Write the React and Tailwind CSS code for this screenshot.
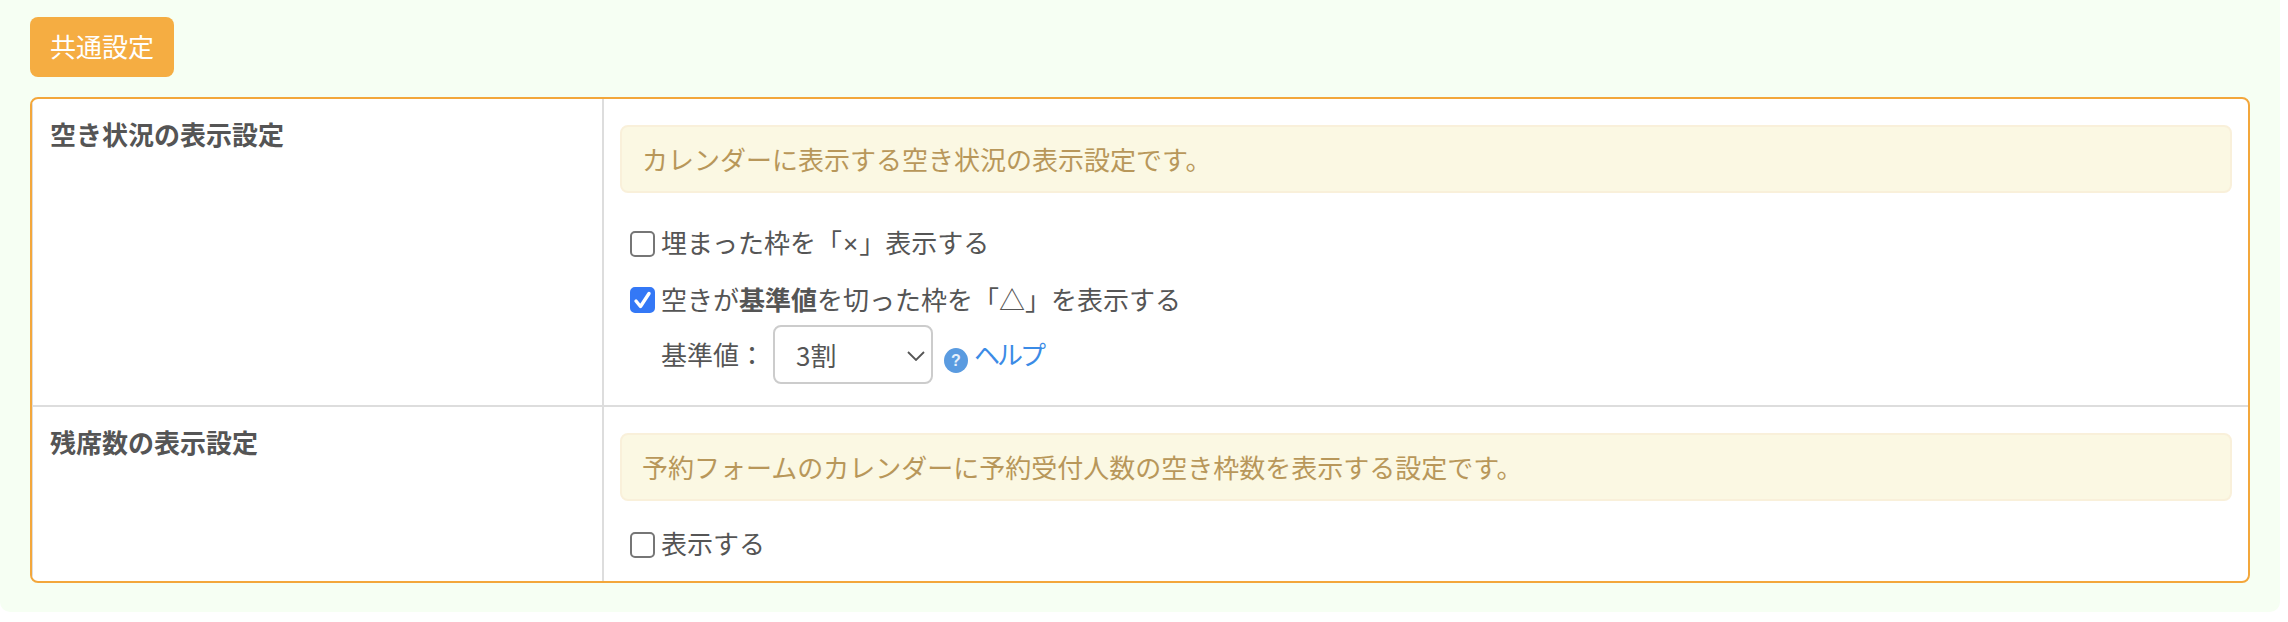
import React from "react";

function Check({ checked }) {
  return (
    <span className="relative w-[26px] h-[26px] shrink-0 mr-[5px]">
      <input
        type="checkbox"
        defaultChecked={checked}
        className="appearance-none block w-[25px] h-[26px] rounded-[5px] border-2 border-[#767676] bg-white checked:bg-[#3478f6] checked:border-[#3478f6]"
      />
      {checked && (
        <svg viewBox="0 0 25 26" className="absolute inset-0 w-[25px] h-[26px] pointer-events-none">
          <path d="M6 14 L10.5 19.5 L19 6.5" fill="none" stroke="#fff" strokeWidth="3.4" strokeLinecap="round" strokeLinejoin="round" />
        </svg>
      )}
    </span>
  );
}

function Notice({ children }) {
  return (
    <div className="h-[68px] flex items-center pl-[20px] rounded-[8px] border-2 border-[#f9f0da] bg-[#fbf8e3] text-[#b8975a]">
      {children}
    </div>
  );
}

export default function App() {
  return (
    <div className="w-[2288px] h-[622px] bg-white overflow-hidden text-[26px] leading-[38px] text-[#555555] font-['Noto_Sans_CJK_JP','Noto_Sans',sans-serif]">
      <div className="w-[2280px] h-[612px] bg-[#f6fff3] rounded-b-[10px] px-[30px] pt-[17px]">
        <button className="block w-[144px] h-[60px] pb-[2px] rounded-[8px] bg-[#f5ad42] text-white text-[26px]">共通設定</button>
        <div className="mt-[20px] h-[486px] bg-white border-2 border-[#f3a73b] rounded-[8px] overflow-hidden">
          <div className="flex h-[308px] border-b-2 border-[#dddddd]">
            <div className="w-[572px] shrink-0 border-l border-r-2 border-[#dddddd] pl-[17px] pt-[16px] font-bold">空き状況の表示設定</div>
            <div className="flex-1 pt-[26px] pl-[16px] pr-[16px]">
              <Notice>カレンダーに表示する空き状況の表示設定です。</Notice>
              <label className="mt-[38px] ml-[10px] h-[26px] flex items-center">
                <Check />
                <span className="pb-[3px]">埋まった枠を「<span className="mx-[1px] font-['Liberation_Sans',sans-serif]">×</span>」表示する</span>
              </label>
              <label className="mt-[30px] ml-[10px] h-[26px] flex items-center">
                <Check checked />
                <span className="pb-[3px]">空きが<b className="font-bold">基準値</b>を切った枠を「△」を表示する</span>
              </label>
              <div className="mt-[12px] ml-[41px] h-[59px] flex items-center">
                <span className="w-[112px] pb-[2px]">基準値：</span>
                <span className="relative w-[160px] h-[59px]">
                  <select className="appearance-none w-full h-full rounded-[8px] border-2 border-[#cccccc] bg-white pl-[21px] text-[#555555] outline-none">
                    <option>3割</option>
                  </select>
                  <svg viewBox="0 0 18 10" className="absolute right-[8px] top-[26px] w-[18px] h-[10px] pointer-events-none">
                    <path d="M1 1 L9 9 L17 1" fill="none" stroke="#555" strokeWidth="1.8" />
                  </svg>
                </span>
                <svg viewBox="0 0 24 25" className="ml-[11px] mt-[11px] w-[24px] h-[25px] shrink-0">
                  <ellipse cx="12" cy="12.5" rx="12" ry="12.5" fill="#5a9be0" />
                  <text x="12" y="18" textAnchor="middle" fontSize="16" fontWeight="700" fill="#e6f0fb" fontFamily="'Liberation Sans', sans-serif">?</text>
                </svg>
                <a className="ml-[6px] pb-[1px] tracking-[-3px] text-[#3b8be6]" href="#">ヘルプ</a>
              </div>
            </div>
          </div>
          <div className="flex h-[174px]">
            <div className="w-[572px] shrink-0 border-l border-r-2 border-[#dddddd] pl-[17px] pt-[16px] font-bold">残席数の表示設定</div>
            <div className="flex-1 pt-[26px] pl-[16px] pr-[16px]">
              <Notice>予約フォームのカレンダーに予約受付人数の空き枠数を表示する設定です。</Notice>
              <label className="mt-[31px] ml-[10px] h-[26px] flex items-center">
                <Check />
                <span className="pb-[4px]">表示する</span>
              </label>
            </div>
          </div>
        </div>
      </div>
    </div>
  );
}
